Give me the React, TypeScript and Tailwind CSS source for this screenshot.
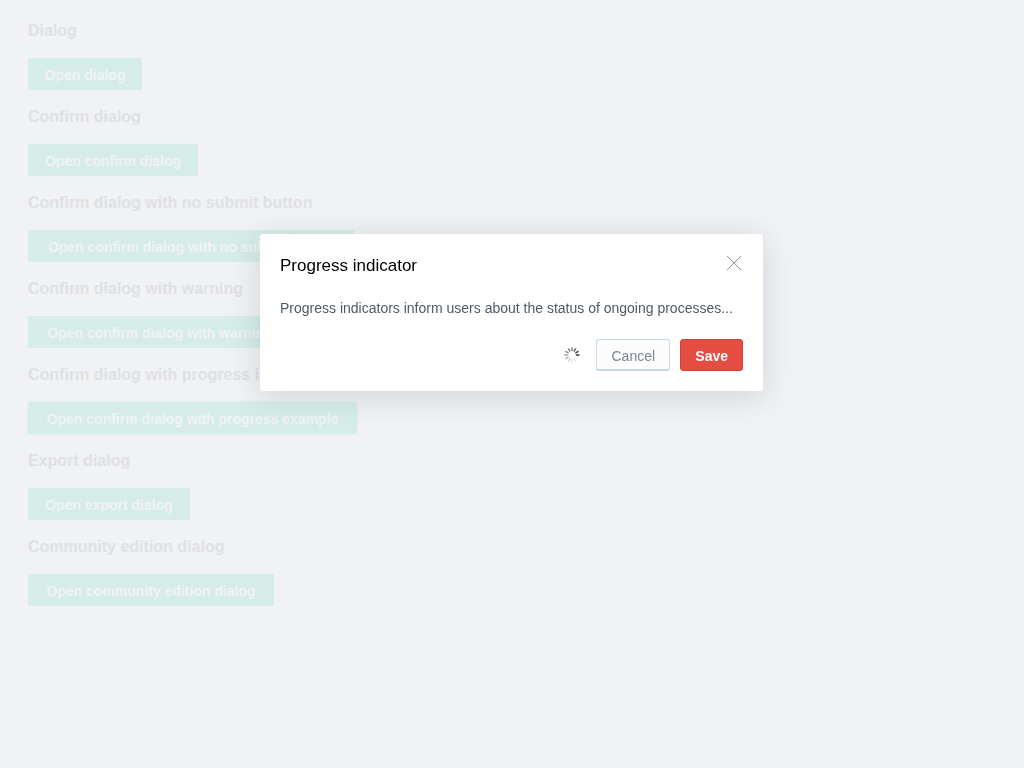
const sections = [
  { title: "Dialog", action: "Open dialog", size: "min-w-[114px]" },
  { title: "Confirm dialog", action: "Open confirm dialog", size: "min-w-[170px]" },
  { title: "Confirm dialog with no submit button", action: "Open confirm dialog with no submit button", size: "min-w-[326px]" },
  { title: "Confirm dialog with warning", action: "Open confirm dialog with warning", size: "min-w-[264px]" },
  { title: "Confirm dialog with progress indicator", action: "Open confirm dialog with progress example", size: "min-w-[329px]", focused: true },
  { title: "Export dialog", action: "Open export dialog", size: "min-w-[162px]" },
  { title: "Community edition dialog", action: "Open community edition dialog", size: "min-w-[246px]" },
];

const spokes = [0.65, 0.75, 0.85, 0.95, 0.06, 0.1, 0.15, 0.22, 0.32, 0.42, 0.5, 0.58];

function Spinner() {
  return (
    <svg width="16" height="16" viewBox="0 0 16 16" role="img" aria-label="Loading">
      {spokes.map((opacity, i) => (
        <line
          key={i}
          x1="8"
          y1="1"
          x2="8"
          y2="3.6"
          stroke="#2b2b2b"
          strokeWidth="1.5"
          strokeLinecap="round"
          opacity={opacity}
          transform={`rotate(${i * 30} 8 8)`}
        />
      ))}
    </svg>
  );
}

function ProgressDialog() {
  return (
    <div className="fixed inset-0 flex items-start justify-center pt-[234px]">
      <div
        role="dialog"
        aria-modal="true"
        aria-labelledby="dialog-title"
        className="mr-px w-[503px] max-w-full rounded-[3px] bg-white p-5 shadow-[0_5px_30px_rgba(57,77,105,0.18)]"
      >
        <header className="flex items-start justify-between">
          <h1 id="dialog-title" className="text-[17px] leading-6 text-black">Progress indicator</h1>
          <button type="button" aria-label="Close" className="mr-px pt-px">
            <svg width="16" height="16" viewBox="0 0 16 16" fill="none" stroke="#8a949b" strokeWidth="1">
              <path d="M1 1l14 14M15 1L1 15" />
            </svg>
          </button>
        </header>
        <p className="mt-5 text-sm leading-5 text-[#4f5a65]">
          Progress indicators inform users about the status of ongoing processes...
        </p>
        <footer className="mt-[21px] flex items-center justify-end gap-[10px]">
          <span className="mr-[6px]"><Spinner /></span>
          <button type="button" className="h-8 min-w-[74px] rounded-[3px] border border-b-2 border-[#c9d8e3] bg-[#fcfcfc] px-[14px] pt-[3px] text-sm leading-5 text-[#7c8894]">
            Cancel
          </button>
          <button type="button" className="h-8 rounded-[3px] border border-[#d0453a] bg-[#e64d42] px-[14px] pt-[2px] text-sm leading-5 font-bold text-white">
            Save
          </button>
        </footer>
      </div>
    </div>
  );
}

export default function App() {
  return (
    <div className="min-h-screen bg-[#f0f2f4] font-['Liberation_Sans',Arial,sans-serif]">
      <main className="flex flex-col items-start gap-[18px] px-7 pt-[22px]">
        {sections.map(({ title, action, size, focused }) => (
          <section key={title} className="flex flex-col items-start gap-[18px]">
            <h3 className="text-base leading-[18px] font-bold text-[#dfe1e3]">{title}</h3>
            <button
              type="button"
              className={`h-8 rounded-[2px] bg-[#d6ece8] px-[15px] pt-[2px] text-center text-sm leading-5 font-bold text-[#f0f2f4] ${size} ${focused ? "shadow-[0_0_3px_#d0ebe5]" : ""}`}
            >
              {action}
            </button>
          </section>
        ))}
      </main>
      <ProgressDialog />
    </div>
  );
}
